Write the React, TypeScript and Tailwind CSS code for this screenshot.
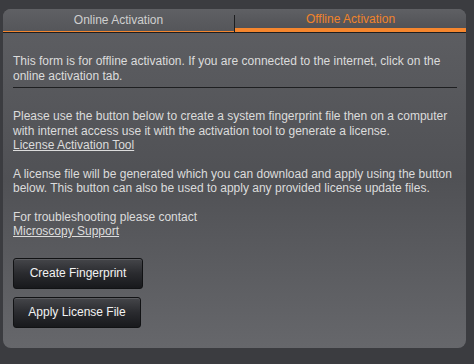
const font = { fontFamily: '"Liberation Sans", Arial, sans-serif' };

const ActionButton = ({ label, width }: { label: string; width: string }) => (
  <button
    className={`${width} h-[31px] rounded-[3px] border border-[#111214] bg-gradient-to-b from-[#45464a] via-[#2a2b2f] to-[#18191c] text-[12px] text-[#f2f2f2] shadow-[inset_0_1px_0_rgba(255,255,255,0.12)]`}
  >
    {label}
  </button>
);

const App = () => {
  return (
    <div
      style={font}
      className="w-[474px] h-[364px] bg-[#3b3c40] pt-[9px] pl-[3px] pr-[8px] pb-[16px]"
    >
      <div className="h-full rounded-[8px] overflow-hidden flex flex-col bg-gradient-to-b from-[#5e5f63] via-[#505155] to-[#66676b]">
        <div className="flex h-[24px] border-b border-[#1d1e20] text-[12px]">
          <div className="flex-1 flex items-center justify-center border-b border-[#f5862e] bg-gradient-to-b from-[#5f6064] to-[#55565a] text-[#cfcfcf]">
            Online Activation
          </div>
          <div className="w-px bg-[#1d1e20] mt-[6px]" />
          <div className="flex-1 flex flex-col bg-gradient-to-b from-[#5f6064] to-[#4e4f53]">
            <div className="flex-1 flex items-center justify-center text-[#f0832a] pt-px">
              Offline Activation
            </div>
            <div className="h-[5px] bg-[#f5862e]" />
          </div>
        </div>

        <div className="px-[10px] pt-[21px] text-[12px] leading-[14.5px] text-[#dcdcdc]">
          <p>
            This form is for offline activation. If you are connected to the
            internet, click on the online activation tab.
          </p>
          <div className="mt-[4px] mr-[-1px] h-px bg-[#1e1f21]" />

          <p className="mt-[21px]">
            Please use the button below to create a system fingerprint file then
            on a computer with internet access use it with the activation tool
            to generate a license.
            <br />
            <span className="underline">License Activation Tool</span>
          </p>

          <p className="mt-[14px]">
            A license file will be generated which you can download and apply
            using the button below. This button can also be used to apply any
            provided license update files.
          </p>

          <p className="mt-[14px]">
            For troubleshooting please contact
            <br />
            <span className="underline">Microscopy Support</span>
          </p>

          <div className="mt-[19px] flex flex-col items-start gap-[8px]">
            <ActionButton label="Create Fingerprint" width="w-[130px]" />
            <ActionButton label="Apply License File" width="w-[128px]" />
          </div>
        </div>
      </div>
    </div>
  );
};

export default App;
